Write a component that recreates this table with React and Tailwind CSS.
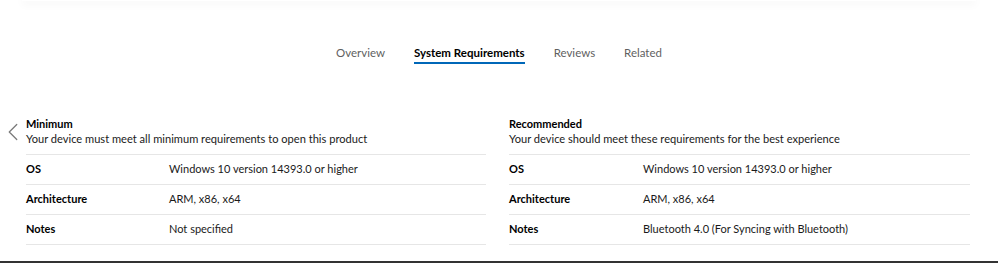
import { ChevronLeft } from "lucide-react";

const minimum = [
  ["OS", "Windows 10 version 14393.0 or higher"],
  ["Architecture", "ARM, x86, x64"],
  ["Notes", "Not specified"],
];

const recommended = [
  ["OS", "Windows 10 version 14393.0 or higher"],
  ["Architecture", "ARM, x86, x64"],
  ["Notes", "Bluetooth 4.0 (For Syncing with Bluetooth)"],
];

function ReqColumn({ title, subtitle, rows, labelW }) {
  return (
    <div className="flex flex-col">
      <div className="h-[40px] pt-[1px] border-b border-[#e6e6e6]">
        <div className="text-[11px] font-bold leading-[15px] text-black">{title}</div>
        <div className="text-[11.1px] leading-[15px] text-[#1a1a1a]">{subtitle}</div>
      </div>
      {rows.map(([label, value]) => (
        <div key={label} className="flex items-center h-[30px] border-b border-[#e6e6e6] text-[11px]">
          <div className={`${labelW} font-bold text-black`}>{label}</div>
          <div className="text-[#1a1a1a]">{value}</div>
        </div>
      ))}
    </div>
  );
}

export default function App() {
  const tabs = ["Overview", "System Requirements", "Reviews", "Related"];
  return (
    <div
      className="relative w-[998px] h-[263px] overflow-hidden bg-white"
      style={{ fontFamily: 'Lato, "Liberation Sans", sans-serif' }}
    >
      <div className="mx-[22px] h-[2px] -mt-[1px] bg-white shadow-[0_2px_8px_rgba(0,0,0,0.10)]" />

      <nav className="flex justify-center gap-[29px] mt-[44px] text-[11.5px]">
        {tabs.map((t) => (
          <div key={t} className="flex flex-col items-stretch">
            <span
              className={
                t === "System Requirements"
                  ? "font-bold text-black leading-[15px]"
                  : "text-[#5f5f5f] leading-[15px]"
              }
            >
              {t}
            </span>
            <span
              className={
                t === "System Requirements"
                  ? "mt-[2px] h-[2px] bg-[#0067b8]"
                  : "mt-[2px] h-[2px]"
              }
            />
          </div>
        ))}
      </nav>

      <div className="flex mt-[51px] pl-[26px]">
        <div className="w-[460px]">
          <ReqColumn
            title="Minimum"
            subtitle="Your device must meet all minimum requirements to open this product"
            rows={minimum}
            labelW="w-[143px]"
          />
        </div>
        <div className="w-[461px] ml-[23px]">
          <ReqColumn
            title="Recommended"
            subtitle="Your device should meet these requirements for the best experience"
            rows={recommended}
            labelW="w-[134px]"
          />
        </div>
      </div>

      <button className="absolute left-[-2px] top-[117px] text-[#7a7a7a]">
        <ChevronLeft size={30} strokeWidth={1} />
      </button>

      <div className="absolute left-0 right-0 bottom-0 h-[2px] bg-[#333]" />
    </div>
  );
}
